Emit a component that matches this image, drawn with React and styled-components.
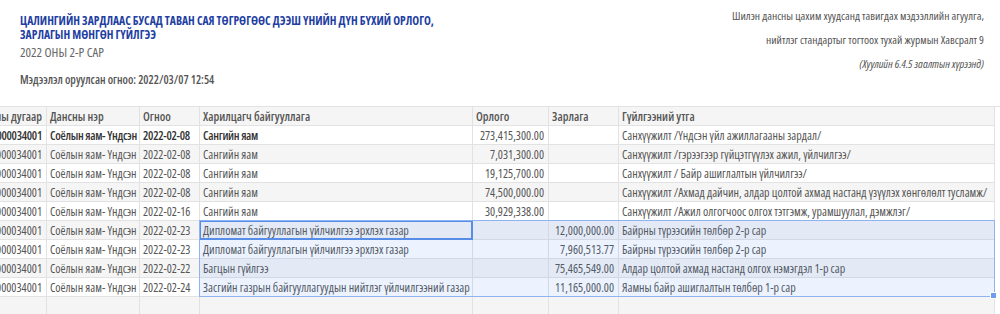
import React from "react";
import styled, { createGlobalStyle } from "styled-components";

const GlobalStyle = createGlobalStyle`
  body {
    margin: 0;
    background: #fff;
    font-family: "Open Sans", "Roboto", sans-serif;
    font-stretch: 75%;
  }
`;

const Page = styled.div`
  width: 1000px;
  height: 314px;
  overflow: hidden;
`;

const Header = styled.div`
  display: flex;
  justify-content: space-between;
  align-items: flex-start;
  padding: 4px 16px 0 20px;
  height: 102px;
`;

const LeftBlock = styled.div`
  padding-top: 10px;
`;

const Title = styled.div`
  color: #1f3fa3;
  font-weight: 700;
  font-size: 11.6px;
  line-height: 14px;
  text-transform: uppercase;
`;

const Period = styled.div`
  color: #666;
  font-size: 13px;
  line-height: 16px;
  margin-top: 2px;
`;

const Meta = styled.div`
  color: #555;
  font-size: 11.6px;
  font-weight: 600;
  line-height: 14px;
  margin-top: 13px;
`;

const RightBlock = styled.div`
  text-align: right;
  color: #555;
  font-size: 11.5px;
  line-height: 24px;
`;

const Note = styled.div`
  font-style: ${(p) => (p.$italic ? "italic" : "normal")};
`;

const Stack = styled.div`
  display: grid;
`;

const Sheet = styled.div`
  grid-area: 1 / 1;
  display: grid;
  grid-template-columns: 47px 93px 60px 273px 76px 70px 376px;
  grid-auto-rows: 19px;
  border-top: 1px solid #e2e2e2;
`;

const Cell = styled.div`
  display: flex;
  align-items: center;
  justify-content: ${(p) => (p.$align === "right" ? "flex-end" : "flex-start")};
  padding: 0 4px 0 3px;
  border-right: 1px solid #e2e2e2;
  border-bottom: 1px solid #e2e2e2;
  background: ${(p) => (p.$shade ? "#f5f5f5" : "#fff")};
  color: ${(p) => (p.$bold ? "#333" : "#555")};
  font-size: 12px;
  font-weight: ${(p) => (p.$bold || p.$head ? 600 : 400)};
  letter-spacing: ${(p) => (p.$bold ? "-0.3px" : "0")};
  white-space: nowrap;
  overflow: hidden;
`;

const Layer = styled.div`
  grid-area: 1 / 1;
  display: grid;
  grid-template-columns: 47px 93px 60px 273px 76px 70px 376px;
  grid-template-rows: repeat(11, 19px);
  padding-top: 1px;
  pointer-events: none;
`;

const Selection = styled.div`
  grid-column: 4 / 8;
  grid-row: 7 / 11;
  position: relative;
  margin: -1px 0 0 -1px;
  border: 1px solid #8fb2f0;
  background: rgba(66, 133, 244, 0.1);
`;

const Active = styled.div`
  grid-column: 4 / 5;
  grid-row: 7 / 8;
  margin: -1px 0 0 -1px;
  border: 2px solid #5a8ee6;
`;

const Handle = styled.span`
  position: absolute;
  right: -3px;
  bottom: -3px;
  width: 5px;
  height: 5px;
  background: #6f9ef0;
  border: 1px solid #fff;
`;

const heads = ["Дансны дугаар", "Дансны нэр", "Огноо", "Харилцагч байгууллага", "Орлого", "Зарлага", "Гүйлгээний утга"];

const rows = [
  ["2022-02-08", "Сангийн яам", "273,415,300.00", "", "Санхүүжилт /Үндсэн үйл ажиллагааны зардал/", true],
  ["2022-02-08", "Сангийн яам", "7,031,300.00", "", "Санхүүжилт /гэрээгээр гүйцэтгүүлэх ажил, үйлчилгээ/"],
  ["2022-02-08", "Сангийн яам", "19,125,700.00", "", "Санхүүжилт / Байр ашиглалтын үйлчилгээ/"],
  ["2022-02-08", "Сангийн яам", "74,500,000.00", "", "Санхүүжилт /Ахмад дайчин, алдар цолтой ахмад настанд үзүүлэх хөнгөлөлт тусламж/"],
  ["2022-02-16", "Сангийн яам", "30,929,338.00", "", "Санхүүжилт /Ажил олгогчоос олгох тэтгэмж, урамшуулал, дэмжлэг/"],
  ["2022-02-23", "Дипломат байгууллагын үйлчилгээ эрхлэх газар", "", "12,000,000.00", "Байрны түрээсийн төлбөр 2-р сар"],
  ["2022-02-23", "Дипломат байгууллагын үйлчилгээ эрхлэх газар", "", "7,960,513.77", "Байрны түрээсийн төлбөр 2-р сар"],
  ["2022-02-22", "Багцын гүйлгээ", "", "75,465,549.00", "Алдар цолтой ахмад настанд олгох нэмэгдэл 1-р сар"],
  ["2022-02-24", "Засгийн газрын байгууллагуудын нийтлэг үйлчилгээний газар", "", "11,165,000.00", "Яамны байр ашиглалтын төлбөр 1-р сар"],
];

export default function App() {
  return (
    <Page>
      <GlobalStyle />
      <Header>
        <LeftBlock>
          <Title>
            Цалингийн зардлаас бусад таван сая төгрөгөөс дээш үнийн дүн бүхий орлого,
            <br />
            зарлагын мөнгөн гүйлгээ
          </Title>
          <Period>2022 ОНЫ 2-Р САР</Period>
          <Meta>Мэдээлэл оруулсан огноо: 2022/03/07 12:54</Meta>
        </LeftBlock>
        <RightBlock>
          <Note>Шилэн дансны цахим хуудсанд тавигдах мэдээллийн агуулга,</Note>
          <Note>нийтлэг стандартыг тогтоох тухай журмын Хавсралт 9</Note>
          <Note $italic>(Хуулийн 6.4.5 заалтын хүрээнд)</Note>
        </RightBlock>
      </Header>
      <Stack>
        <Sheet>
          {heads.map((h, i) => (
            <Cell key={h} $shade $head $align={i === 0 ? "right" : "left"}>
              {h}
            </Cell>
          ))}
          {rows.map(([date, org, inc, exp, desc, bold], r) => (
            <React.Fragment key={r}>
              <Cell $shade={r % 2 === 1} $bold={bold} $align="right">100000034001</Cell>
              <Cell $shade={r % 2 === 1} $bold={bold}>Соёлын яам- Үндсэн</Cell>
              <Cell $shade={r % 2 === 1} $bold={bold}>{date}</Cell>
              <Cell $shade={r % 2 === 1} $bold={bold}>{org}</Cell>
              <Cell $shade={r % 2 === 1} $align="right">{inc}</Cell>
              <Cell $shade={r % 2 === 1} $align="right">{exp}</Cell>
              <Cell $shade={r % 2 === 1}>{desc}</Cell>
            </React.Fragment>
          ))}
          {heads.map((h) => (
            <Cell key={"blank-" + h} $shade />
          ))}
        </Sheet>
        <Layer>
          <Selection>
            <Handle />
          </Selection>
          <Active />
        </Layer>
      </Stack>
    </Page>
  );
}
